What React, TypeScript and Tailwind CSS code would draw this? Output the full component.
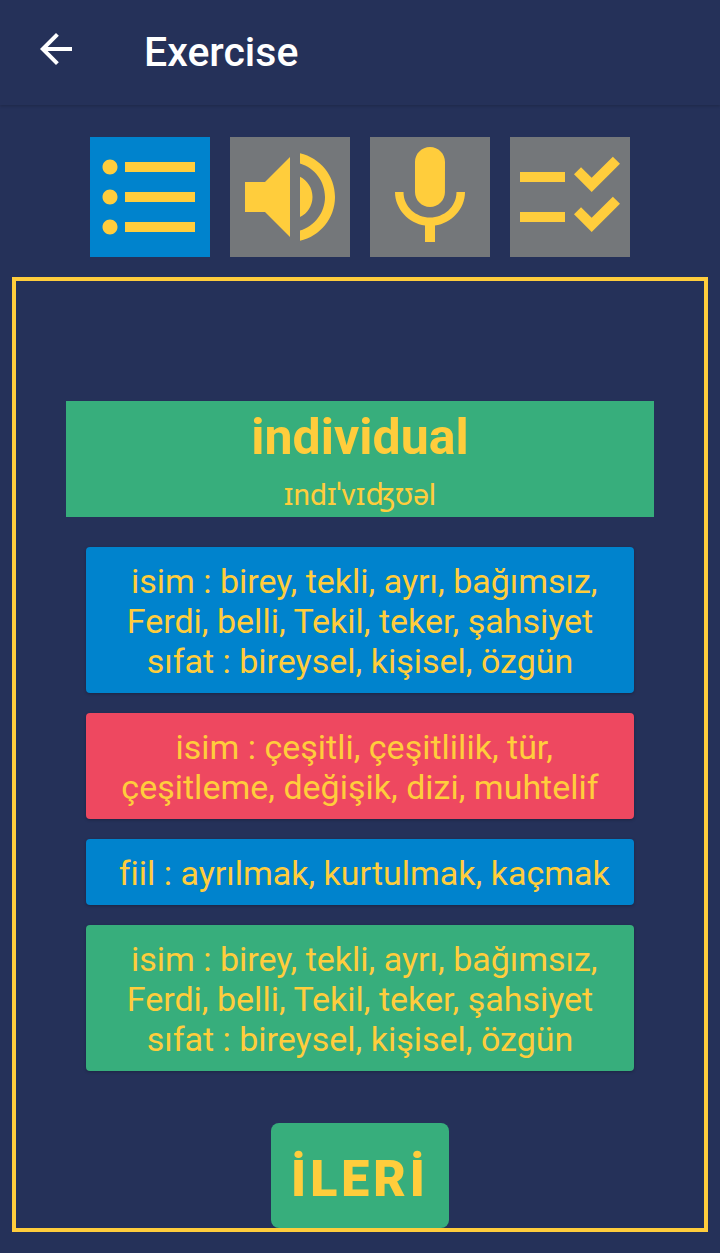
import React from "react";

type Mode = { label: string; path: string; active?: boolean };

const modes: Mode[] = [
  {
    label: "Multiple choice",
    active: true,
    path: "M4 10.5c-.83 0-1.5.67-1.5 1.5s.67 1.5 1.5 1.5 1.5-.67 1.5-1.5-.67-1.5-1.5-1.5zm0-6c-.83 0-1.5.67-1.5 1.5S3.17 7.5 4 7.5 5.5 6.83 5.5 6 4.83 4.5 4 4.5zm0 12c-.83 0-1.5.68-1.5 1.5s.68 1.5 1.5 1.5 1.5-.68 1.5-1.5-.67-1.5-1.5-1.5zM7 19h14v-2H7v2zm0-6h14v-2H7v2zm0-8v2h14V5H7z",
  },
  {
    label: "Listening",
    path: "M3 9v6h4l5 5V4L7 9H3zm13.5 3c0-1.77-1.02-3.29-2.5-4.03v8.05c1.48-.73 2.5-2.25 2.5-4.02zM14 3.23v2.06c2.89.86 5 3.54 5 6.71s-2.11 5.85-5 6.71v2.06c4.01-.91 7-4.49 7-8.77s-2.99-7.86-7-8.77z",
  },
  {
    label: "Speaking",
    path: "M12 14c1.66 0 2.99-1.34 2.99-3L15 5c0-1.66-1.34-3-3-3S9 3.34 9 5v6c0 1.66 1.34 3 3 3zm5.3-3c0 3-2.54 5.1-5.3 5.1S6.7 14 6.7 11H5c0 3.41 2.72 6.23 6 6.72V21h2v-3.28c3.28-.48 6-3.3 6-6.72h-1.7z",
  },
  {
    label: "Checklist",
    path: "M11 7H2v2h9V7zm0 8H2v2h9v-2zM16.34 11l-3.54-3.54 1.41-1.41 2.12 2.12 4.24-4.24L22 5.34 16.34 11zm0 8l-3.54-3.54 1.41-1.41 2.12 2.12 4.24-4.24L22 13.34 16.34 19z",
  },
];

// Each meaning begins with a space, which the buttons preserve.
const individual =
  " isim : birey, tekli, ayrı, bağımsız, Ferdi, belli, Tekil, teker, şahsiyet\nsıfat : bireysel, kişisel, özgün";

const options = [
  { text: individual, color: "bg-[#0083cd]" },
  { text: " isim : çeşitli, çeşitlilik, tür, çeşitleme, değişik, dizi, muhtelif", color: "bg-[#ee4860]" },
  { text: " fiil : ayrılmak, kurtulmak, kaçmak", color: "bg-[#0083cd]" },
  { text: individual, color: "bg-[#37ae7c]" },
];

export default function App() {
  return (
    <div
      lang="tr"
      className="flex min-h-screen flex-col bg-[#253159] font-[Roboto,'Noto_Sans',sans-serif] text-[#ffcd3c] [font-variant-ligatures:none]"
    >
      <header className="flex h-[105px] items-start gap-16 px-8 pt-[25px] text-white shadow-[0_1px_3px_rgba(0,0,0,0.2)]">
        <button type="button" aria-label="Back">
          <svg viewBox="0 0 24 24" className="size-12" fill="currentColor">
            <path d="M20 11H7.83l5.59-5.59L12 4l-8 8 8 8 1.41-1.41L7.83 13H20v-2z" />
          </svg>
        </button>
        <h1 className="text-[41px] leading-[54px] font-medium">Exercise</h1>
      </header>

      <nav aria-label="Exercise type" className="flex justify-center gap-5 pt-8 pb-5">
        {modes.map((mode) => (
          <button
            key={mode.label}
            type="button"
            aria-label={mode.label}
            aria-pressed={!!mode.active}
            className={mode.active ? "bg-[#0083cd]" : "bg-[#74777a]"}
          >
            <svg viewBox="0 0 24 24" className="size-30" fill="currentColor">
              <path d={mode.path} />
            </svg>
          </button>
        ))}
      </nav>

      <main className="mx-3 mb-[21px] flex flex-1 flex-col items-center border-4 border-[#ffcd3c] px-[50px] pt-30">
        <section className="w-full bg-[#37ae7c] pt-1 text-center">
          <h2 className="text-[50px] leading-16 font-bold">individual</h2>
          <p className="pt-1 text-[30px] leading-11">ɪndɪˈvɪʤʊəl</p>
        </section>

        <div className="flex w-full flex-col gap-5 px-5 pt-[30px]">
          {options.map((option, i) => (
            <button
              key={i}
              type="button"
              className={`rounded-sm px-4 pt-[14px] pb-3 text-center text-[34px] leading-10 whitespace-pre-wrap shadow-[0_1px_3px_rgba(0,0,0,0.25)] ${option.color}`}
            >
              {option.text}
            </button>
          ))}
        </div>

        <button
          type="button"
          className="mt-auto rounded-lg bg-[#37ae7c] px-5 pt-[26px] pb-[18px] text-[50px] leading-[61px] font-black tracking-[4px]"
        >
          İLERİ
        </button>
      </main>
    </div>
  );
}
